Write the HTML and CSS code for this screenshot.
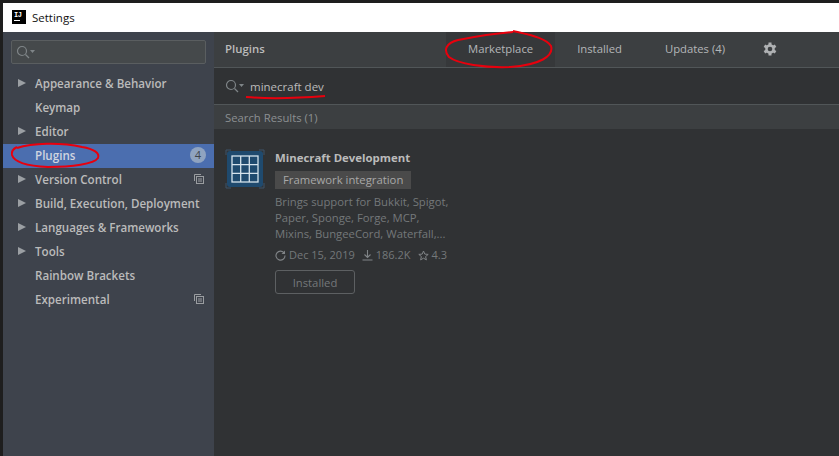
FILE: index.html
```html
<!DOCTYPE html>
<html lang="en">
<head>
    <meta charset="UTF-8">
    <title>Settings</title>
    <link rel="stylesheet" href="styles.css">
</head>
<body>
    <div class="window">
        <div class="titlebar">
            <span class="app-logo"><span class="logo-text">IJ</span><span class="logo-line"></span></span>
            <span class="title">Settings</span>
        </div>
        <div class="main">
            <div class="sidebar">
                <div class="side-search">
                    <svg class="search-icon" width="22" height="14" viewBox="0 0 22 14"><circle cx="6" cy="6" r="4.5" fill="none" stroke="#7f8588" stroke-width="1.2"/><path d="M9.5 9.5L13 13" stroke="#7f8588" stroke-width="1.3"/><path d="M14 5h5l-2.5 3z" fill="#7f8588"/></svg>
                </div>
                <ul class="tree">
                    <li class="tree-item"><span class="arrow"></span>Appearance &amp; Behavior</li>
                    <li class="tree-item"><span class="no-arrow"></span>Keymap</li>
                    <li class="tree-item"><span class="arrow"></span>Editor</li>
                    <li class="tree-item selected"><span class="no-arrow"></span>Plugins<span class="badge">4</span></li>
                    <li class="tree-item"><span class="arrow"></span>Version Control
                        <svg class="copy-icon" width="10" height="10" viewBox="0 0 10 10"><path d="M0.5 7V0.5H7" fill="none" stroke="#9a9da0"/><rect x="2.5" y="2.5" width="7" height="7" fill="none" stroke="#9a9da0"/><path d="M4 5h4M4 7h4" stroke="#9a9da0"/></svg>
                    </li>
                    <li class="tree-item"><span class="arrow"></span>Build, Execution, Deployment</li>
                    <li class="tree-item"><span class="arrow"></span>Languages &amp; Frameworks</li>
                    <li class="tree-item"><span class="arrow"></span>Tools</li>
                    <li class="tree-item"><span class="no-arrow"></span>Rainbow Brackets</li>
                    <li class="tree-item"><span class="no-arrow"></span>Experimental
                        <svg class="copy-icon" width="10" height="10" viewBox="0 0 10 10"><path d="M0.5 7V0.5H7" fill="none" stroke="#9a9da0"/><rect x="2.5" y="2.5" width="7" height="7" fill="none" stroke="#9a9da0"/><path d="M4 5h4M4 7h4" stroke="#9a9da0"/></svg>
                    </li>
                </ul>
            </div>
            <div class="content">
                <div class="tabs-bar">
                    <span class="heading">Plugins</span>
                    <div class="tabs">
                        <span class="tab active">Marketplace</span>
                        <span class="tab">Installed</span>
                        <span class="tab updates">Updates (4)</span>
                        <svg class="gear" width="14" height="14" viewBox="0 0 14 14">
                            <g stroke="#afb1b3" stroke-width="3">
                                <path d="M7 0.5V13.5M1.4 3.75L12.6 10.25M1.4 10.25L12.6 3.75"/>
                            </g>
                            <circle cx="7" cy="7" r="3.6" fill="none" stroke="#afb1b3" stroke-width="2.4"/>
                            <circle cx="7" cy="7" r="2.3" fill="#3c3f41"/>
                        </svg>
                    </div>
                </div>
                <div class="search-row">
                    <svg class="search-icon" width="22" height="14" viewBox="0 0 22 14"><circle cx="6" cy="6" r="4.5" fill="none" stroke="#7f8588" stroke-width="1.2"/><path d="M9.5 9.5L13 13" stroke="#7f8588" stroke-width="1.3"/><path d="M14 5h5l-2.5 3z" fill="#7f8588"/></svg>
                    <span class="search-text">minecraft dev</span>
                </div>
                <div class="results-head">Search Results (1)</div>
                <div class="plugin">
                    <div class="plugin-logo">
                        <svg width="40" height="40" viewBox="0 0 40 40">
                            <path d="M1 6V1H6M34 1H39V6M1 34V39H6M34 39H39V34" fill="none" stroke="#3c5368" stroke-width="1"/>
                            <rect x="2" y="2" width="36" height="36" rx="3" fill="#1f4a6e"/>
                            <g fill="none" stroke="#d5e2ec" stroke-width="1.3">
                                <rect x="7" y="7" width="26" height="26"/>
                                <path d="M15.7 7V33M24.3 7V33M7 15.7H33M7 24.3H33"/>
                            </g>
                        </svg>
                    </div>
                    <div class="plugin-info">
                        <div class="plugin-name">Minecraft Development</div>
                        <span class="tag">Framework integration</span>
                        <p class="plugin-desc">Brings support for Bukkit, Spigot,<br>Paper, Sponge, Forge, MCP,<br>Mixins, BungeeCord, Waterfall,...</p>
                        <div class="plugin-meta">
                            <svg width="11" height="11" viewBox="0 0 11 11"><path d="M9.3 3.2A4.5 4.5 0 1 0 10 5.5" fill="none" stroke="#808487" stroke-width="1.1"/><path d="M10 0.5V4H6.5z" fill="#808487"/></svg>
                            <span class="meta-date">Dec 15, 2019</span>
                            <svg width="11" height="11" viewBox="0 0 11 11"><path d="M5.5 0V7M2.5 4.5L5.5 7.5L8.5 4.5M0.5 10H10.5" fill="none" stroke="#808487" stroke-width="1.1"/></svg>
                            <span class="meta-count">186.2K</span>
                            <svg width="11" height="11" viewBox="0 0 11 11"><path d="M5.5 1L6.8 4.1L10.2 4.4L7.6 6.6L8.4 9.9L5.5 8.2L2.6 9.9L3.4 6.6L0.8 4.4L4.2 4.1Z" fill="none" stroke="#808487"/></svg>
                            <span>4.3</span>
                        </div>
                        <button class="installed-btn" type="button">Installed</button>
                    </div>
                </div>
            </div>
        </div>
        <!-- red marks drawn on the screenshot -->
        <svg class="marks" width="839" height="456" viewBox="0 0 839 456">
            <g fill="none" stroke="#e8000d" stroke-width="2">
                <path d="M17 148C32 143 60 142 82 147C94 149 100 153 98 158C94 164 72 167 48 167C28 166 14 162 12 155C11 151 13 149 17 147"/>
                <path d="M513 31C530 35 546 38 551 46C554 56 540 65 510 67C485 68 458 64 449 57C443 50 446 43 458 40C478 36 498 33 513 32"/>
                <path d="M246 97C270 99 300 98 325 96"/>
            </g>
        </svg>
    </div>
</body>
</html>
```

FILE: styles.css
```css
* {
    box-sizing: border-box;
}

html, body {
    margin: 0;
    padding: 0;
}

body {
    font-family: "Open Sans", "Noto Sans", sans-serif;
    background-color: #2b2b2b;
}

.window {
    position: relative;
    width: 839px;
    height: 456px;
    overflow: hidden;
    display: flex;
    flex-direction: column;
    padding: 3px 0 0 3px;
    background-color: #1e1e1e;
}

.titlebar {
    height: 29px;
    flex-shrink: 0;
    display: flex;
    align-items: center;
    background-color: #fff;
    padding-left: 9px;
    color: #111;
    font-size: 11.5px;
}

.app-logo {
    width: 14px;
    height: 14px;
    background-color: #000;
    color: #fff;
    display: flex;
    flex-direction: column;
    padding: 1px 2px;
    margin-right: 6px;
    margin-top: -1px;
}

.logo-text {
    font-family: "Liberation Mono", monospace;
    font-size: 7px;
    font-weight: bold;
    line-height: 8px;
    letter-spacing: -0.5px;
}

.logo-line {
    width: 6px;
    height: 1px;
    margin-top: 1px;
    background-color: #fff;
}

.title {
    margin-top: -1px;
}

.main {
    flex: 1;
    display: flex;
    min-height: 0;
}

.sidebar {
    width: 211px;
    flex-shrink: 0;
    background-color: #3e434c;
    padding-top: 8px;
}

.side-search {
    height: 24px;
    margin: 0 8px;
    border: 1px solid #5a5e60;
    border-radius: 2px;
    background-color: #45494b;
    display: flex;
    align-items: center;
    padding-left: 4px;
}

.tree {
    list-style: none;
    margin: 8px 0 0;
    padding: 0;
}

.tree-item {
    height: 24px;
    display: flex;
    align-items: center;
    padding-bottom: 2px;
    font-size: 11.6px;
    font-weight: 600;
    color: #bbbbbb;
    white-space: nowrap;
}

.tree-item.selected {
    background-color: #4b6eaf;
    color: #d0d5e0;
}

.arrow {
    width: 0;
    height: 0;
    margin: 0 9px 0 15px;
    border-left: 8px solid #9b9fa3;
    border-top: 4.5px solid transparent;
    border-bottom: 4.5px solid transparent;
}

.no-arrow {
    width: 32px;
}

.badge {
    margin-left: auto;
    margin-right: 8px;
    width: 16px;
    height: 16px;
    border-radius: 50%;
    background-color: #8fa3c0;
    color: #3e434c;
    font-size: 11px;
    font-weight: 400;
    line-height: 16px;
    text-align: center;
}

.copy-icon {
    margin-left: auto;
    margin-right: 10px;
}

.content {
    flex: 1;
    min-width: 0;
    display: flex;
    flex-direction: column;
    background-color: #303234;
}

.tabs-bar {
    height: 36px;
    flex-shrink: 0;
    display: flex;
    background-color: #3c3f41;
    border-bottom: 1px solid #515658;
    padding-left: 11px;
}

.heading {
    font-size: 11.4px;
    font-weight: 600;
    color: #bbbbbb;
    line-height: 33px;
    width: 221px;
}

.tabs {
    display: flex;
    align-items: center;
}

.tab {
    font-size: 11.3px;
    color: #b4b6b8;
    height: 35px;
    line-height: 33px;
    padding: 0 22px;
}

.tab.active {
    background-color: #36383a;
}

.tab.updates {
    padding-left: 21px;
}

.gear {
    margin-left: 16px;
    margin-top: -1px;
}

.search-row {
    height: 37px;
    flex-shrink: 0;
    display: flex;
    align-items: center;
    padding-left: 11px;
    border-bottom: 1px solid #515658;
}

.search-row .search-icon {
    margin-right: 3px;
}

.search-text {
    font-size: 11.5px;
    color: #bbbbbb;
}

.results-head {
    height: 24px;
    flex-shrink: 0;
    line-height: 26px;
    padding-left: 11px;
    background-color: #3c3f41;
    font-size: 11.3px;
    color: #8c9092;
}

.plugin {
    display: flex;
    padding: 20px 0 0 11px;
}

.plugin-logo {
    width: 50px;
    height: 40px;
    flex-shrink: 0;
}

.plugin-logo svg {
    display: block;
}

.plugin-name {
    font-size: 11.4px;
    font-weight: 700;
    color: #bbbbbb;
    line-height: 18px;
}

.tag {
    display: inline-block;
    height: 18px;
    margin-top: 3px;
    padding: 0 8px;
    background-color: #4a4a4a;
    color: #a8a8a8;
    font-size: 11.3px;
    line-height: 18px;
}

.plugin-desc {
    margin: 5px 0 0;
    font-size: 11.3px;
    line-height: 16px;
    color: #74787a;
}

.plugin-meta {
    display: flex;
    align-items: center;
    margin-top: 5px;
    font-size: 11px;
    line-height: 16px;
    color: #74787a;
}

.plugin-meta svg {
    margin-right: 3px;
}

.meta-date,
.meta-count {
    margin-right: 7px;
}

.installed-btn {
    display: block;
    width: 80px;
    height: 24px;
    margin-top: 7px;
    border: 1px solid #5d6062;
    border-radius: 3px;
    background: transparent;
    color: #74787a;
    font-family: inherit;
    font-size: 11.3px;
    padding: 0;
}

.marks {
    position: absolute;
    left: 0;
    top: 0;
    pointer-events: none;
}
```
